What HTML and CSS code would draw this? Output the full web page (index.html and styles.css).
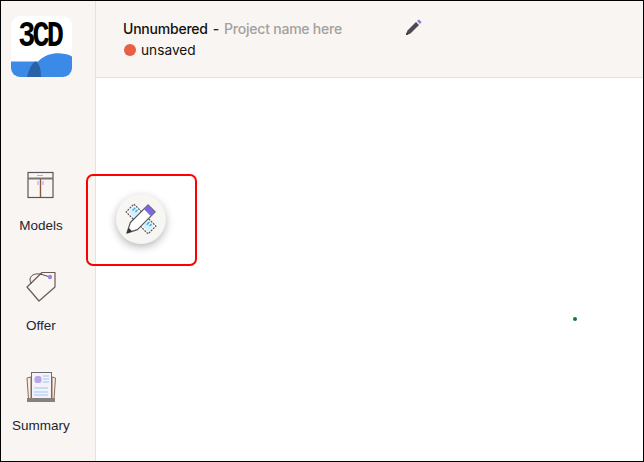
FILE: index.html
```html
<!DOCTYPE html>
<html lang="en">
<head>
<meta charset="utf-8">
<title>3CD</title>
<link rel="stylesheet" href="styles.css">
</head>
<body>
<div class="app">
  <aside class="sidebar">
    <div class="logo">
      <span class="logo-text">3CD</span>
      <svg class="logo-wave" width="61" height="24" viewBox="0 0 61 24">
        <path d="M0 8.500H27C33 2 42 0 48 .3C54 .5 58 2 61 3.500V24H0Z" fill="#3b8ae8"/>
        <path d="M16 24C18 16 21 10 24.500 8.500C29 10 30 18 30 24Z" fill="#2a62a6"/>
      </svg>
    </div>
    <nav class="nav">
      <div class="nav-item">
        <span class="icon-box">
          <svg width="30" height="30" viewBox="0 0 30 30" fill="none">
            <rect x="2" y="1.500" width="25" height="25" stroke="#5b5560" stroke-width="1.200"/>
            <path d="M2 7.500H27" stroke="#7b7570" stroke-width="2"/>
            <path d="M14.500 8V26" stroke="#8a5a3a" stroke-width="1.400"/>
            <path d="M11 4.500H17M12 10V14M17 10V14" stroke="#b9a6ea" stroke-width="1.200"/>
          </svg>
        </span>
        <span class="nav-label">Models</span>
      </div>
      <div class="nav-item">
        <span class="icon-box">
          <svg width="32" height="32" viewBox="0 0 32 32" fill="none">
            <path d="M17 1.500H30V16L14 30L2 16Z" stroke="#6b5a50" stroke-width="1.200" stroke-linejoin="round"/>
            <path d="M25 6L17 3.500C12 2 6 3 5 8C5 10 5.500 11 6 12.500" stroke="#4e4a4a" stroke-width="1"/>
            <circle cx="25" cy="6" r="2.200" fill="#9a86e6"/>
          </svg>
        </span>
        <span class="nav-label">Offer</span>
      </div>
      <div class="nav-item">
        <span class="icon-box">
          <svg width="30" height="32" viewBox="0 0 30 32" fill="none">
            <path d="M5 6L1 7L2.500 28H5ZM26 6L29.500 7L28 28H26Z" fill="#f5efe9" stroke="#8a6a50" stroke-width="1"/>
            <rect x="5.500" y="1.500" width="20" height="27" fill="#f4f2f8" stroke="#6c6a72" stroke-width="1"/>
            <rect x="8.500" y="5" width="7" height="7" rx="2.500" fill="#b9a6ea"/>
            <path d="M17 5H23M17 8H23M17 11H23M8 17H22M8 21H22M8 24H22" stroke="#9cc4f5" stroke-width="1.200"/>
            <rect x="1" y="27" width="28" height="4" fill="#85817e"/>
          </svg>
        </span>
        <span class="nav-label">Summary</span>
      </div>
    </nav>
  </aside>
  <main class="main">
    <header class="header">
      <div class="title-row">
        <span class="title">Unnumbered</span>
        <span class="dash">-</span>
        <span class="project">Project name here</span>
        <svg class="pencil" width="17" height="17" viewBox="0 0 17 17">
          <path d="M11 3L14 6L5.500 14.500L1 16L2.500 11.500Z" fill="#4a4a52"/>
          <path d="M12 2L14 .5L16.500 3L15 5Z" fill="#8b78dc"/>
          <path d="M1 16L1.800 13.500L3.500 15.200Z" fill="#222"/>
        </svg>
      </div>
      <div class="status-row">
        <span class="status-dot"></span>
        <span class="status">unsaved</span>
      </div>
    </header>
    <section class="canvas"></section>
  </main>
  <div class="highlight"></div>
  <button class="fab" aria-label="Tools">
    <svg class="fab-icon" width="38" height="38" viewBox="0 0 38 38" fill="none">
      <g transform="rotate(45 19 19)">
        <rect x="3.500" y="13.500" width="31" height="11" fill="#fff" stroke="#55555a" stroke-width="1.200" stroke-dasharray="2 1"/>
        <rect x="5" y="15" width="8" height="8" fill="#d6effc"/>
        <rect x="25" y="15" width="8" height="8" fill="#d6effc"/>
        <path d="M7 15V19M10 15V18M27 15V19M30 15V18" stroke="#38aef0" stroke-width="1.400"/>
      </g>
      <g transform="rotate(-45 19 19)">
        <path d="M9 14H34V24H9L-1 19Z" fill="#fff" stroke="#55555a" stroke-width="1.200" stroke-linejoin="round"/>
        <rect x="28" y="14" width="6" height="10" fill="#7d68d8"/>
        <path d="M-1 19L4 16.500V21.500Z" fill="#333"/>
      </g>
    </svg>
  </button>
  <span class="dot"></span>
</div>
</body>
</html>
```
FILE: styles.css
```css
* {
  box-sizing: border-box;
}

html,
body {
  margin: 0;
  height: 100%;
}

body {
  background: #fff;
  font-family: "Liberation Sans", Arial, sans-serif;
  color: #1a1a1a;
}

.app {
  position: relative;
  display: flex;
  width: 644px;
  height: 462px;
  overflow: hidden;
  border: 1px solid #000;
}

.sidebar {
  flex: 0 0 95px;
  display: flex;
  flex-direction: column;
  align-items: center;
  background: #f9f5f2;
  border-right: 1px solid #eadfd9;
  padding-top: 15px;
}

.logo {
  position: relative;
  flex: none;
  width: 61px;
  height: 61px;
  margin-right: 14px;
  background: #fff;
  border-radius: 9px;
  overflow: hidden;
  text-align: center;
}

.logo-text {
  display: block;
  padding-top: 5px;
  padding-right: 4px;
  font-family: "Liberation Mono", monospace;
  font-size: 30px;
  line-height: 30px;
  font-weight: 700;
  letter-spacing: -3px;
  color: #000;
  transform: scale(.95, 1.200);
}

.logo-wave {
  position: absolute;
  left: 0;
  bottom: 0;
}

.nav {
  display: flex;
  flex-direction: column;
  gap: 37px;
  margin-top: 94px;
  margin-right: 14px;
  align-items: center;
}

.nav-item {
  display: flex;
  flex-direction: column;
  align-items: center;
  height: 63px;
  gap: 15px;
}

.icon-box {
  display: flex;
  flex: none;
  height: 32px;
}

.nav-label {
  font-size: 13.500px;
  line-height: 16px;
  color: #1f2430;
}

.main {
  flex: 1;
  display: flex;
  flex-direction: column;
}

.header {
  flex: 0 0 77px;
  background: #f9f5f2;
  border-bottom: 1px solid #e6e1dd;
  padding: 17px 0 0 27px;
  font-family: Inter, sans-serif;
}

.title-row {
  display: flex;
  align-items: center;
  height: 20px;
  font-size: 14px;
  font-weight: 500;
  letter-spacing: -.22px;
}

.title {
  color: #111;
}

.dash {
  margin-left: 5px;
  color: #222;
}

.project {
  margin-left: 5px;
  color: #a1a1a1;
}

.pencil {
  margin-left: 63px;
  margin-top: -2px;
}

.status-row {
  display: flex;
  align-items: center;
  gap: 5px;
  height: 20px;
  margin-top: 2px;
  padding-left: 1px;
  font-size: 13.700px;
}

.status-dot {
  width: 12px;
  height: 12px;
  border-radius: 50%;
  background: #e85f42;
}

.status {
  color: #111;
}

.canvas {
  flex: 1;
  background: #fff;
}

.highlight {
  position: absolute;
  left: 85px;
  top: 173px;
  width: 111px;
  height: 92px;
  border: 2px solid #f00;
  border-radius: 7px;
  pointer-events: none;
}

.fab {
  position: absolute;
  left: 115px;
  top: 193px;
  width: 50px;
  height: 50px;
  padding: 6px;
  border: 0;
  border-radius: 50%;
  background: #f8f6f3;
  box-shadow: 0 3px 9px rgba(0, 0, 0, .28);
  display: flex;
}

.fab-icon {
  overflow: visible;
}

.dot {
  position: absolute;
  left: 572px;
  top: 316px;
  width: 4px;
  height: 4px;
  border-radius: 50%;
  background: #1a7a2a;
}
```
